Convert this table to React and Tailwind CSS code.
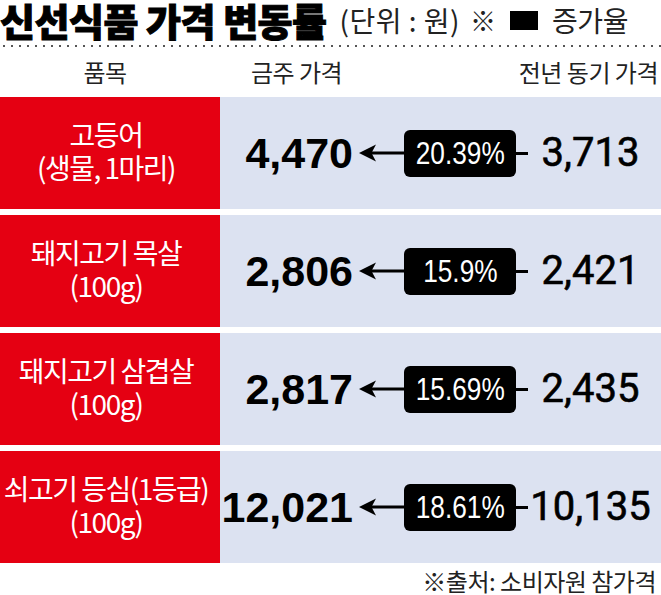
const rows = [
  { name: ["고등어", "(생물, 1마리)"], now: "4,470", rate: "20.39%", prev: "3,713" },
  { name: ["돼지고기 목살", "(100g)"], now: "2,806", rate: "15.9%", prev: "2,421" },
  { name: ["돼지고기 삼겹살", "(100g)"], now: "2,817", rate: "15.69%", prev: "2,435" },
  { name: ["쇠고기 등심(1등급)", "(100g)"], now: "12,021", rate: "18.61%", prev: "10,135" },
];

const kr = { fontFamily: '"Noto Sans CJK KR", "Noto Sans", sans-serif' };
const num = { fontFamily: '"Liberation Sans", Arial, sans-serif' };

const Arrow = () => (
  <svg width="45" height="20" viewBox="0 0 45 20" className="ml-[6px] shrink-0">
    <polygon points="0,10 17,1.5 12.5,10 17,18.5" fill="#000" />
    <rect x="10" y="8.5" width="35" height="3" fill="#000" />
  </svg>
);

const PriceRow = ({ row }) => (
  <div className="flex h-[112px]">
    <div
      className="flex w-[220px] shrink-0 flex-col items-center justify-center bg-[#e50012] pr-[8px] pb-[4px] text-[28px] leading-[33px] tracking-[-1.5px] text-white"
      style={kr}
    >
      {row.name.map((line) => (
        <span key={line} className="whitespace-nowrap">{line}</span>
      ))}
    </div>
    <div className="flex flex-1 items-center bg-[#dce2f1]">
      <div className="w-[133px] shrink-0 text-right text-[43px] font-bold leading-none text-black" style={num}>
        {row.now}
      </div>
      <Arrow />
      <div className="flex h-[47px] w-[112px] shrink-0 items-center justify-center rounded-[6px] bg-black">
        <span className="inline-block scale-x-[0.82] whitespace-nowrap text-[32px] leading-none text-white" style={num}>
          {row.rate}
        </span>
      </div>
      <div className="h-[3px] w-[12px] shrink-0 bg-black" />
      <div
        className="flex-1 pr-[8px] text-center text-[40px] leading-none text-black [-webkit-text-stroke:0.6px_black]"
        style={{ fontFamily: 'Roboto, "Liberation Sans", sans-serif' }}
      >
        {row.prev}
      </div>
    </div>
  </div>
);

export default function App() {
  return (
    <div className="relative h-[595px] w-[661px] overflow-hidden bg-white text-[#222]" style={kr}>
      {/* title */}
      <div className="flex h-[40px] items-center whitespace-nowrap">
        <span className="text-[38px] font-black leading-[40px] tracking-[-0.5px] text-black [-webkit-text-stroke:1px_black]">
          신선식품 가격 변동률
        </span>
        <span className="ml-[13px] text-[28px] leading-[40px] tracking-[0.5px]">(단위 : 원)</span>
        <span className="ml-[10px] text-[26px] leading-[40px]">※</span>
        <span className="ml-[14px] inline-block h-[19px] w-[28px] bg-black" />
        <span className="ml-[14px] text-[28px] leading-[40px] tracking-[-0.5px]">증가율</span>
      </div>

      {/* dotted rule */}
      <div className="mt-[5px] h-[2px] bg-[radial-gradient(circle,#555_0.9px,transparent_1.3px)] bg-[length:8px_2px]" />

      {/* header */}
      <div className="flex h-[50px] items-center text-[24px] leading-none tracking-[-0.5px]">
        <span className="w-[210px] text-center">품목</span>
        <span className="ml-[41px]">금주 가격</span>
        <span className="ml-auto pr-[3px]">전년 동기 가격</span>
      </div>

      {/* rows */}
      <div className="flex flex-col gap-[6px]">
        {rows.map((row) => (
          <PriceRow key={row.now} row={row} />
        ))}
      </div>

      {/* source */}
      <div className="mt-[4px] pr-[5px] text-right text-[24px] leading-[28px] tracking-[-0.5px]">
        ※출처: 소비자원 참가격
      </div>
    </div>
  );
}
